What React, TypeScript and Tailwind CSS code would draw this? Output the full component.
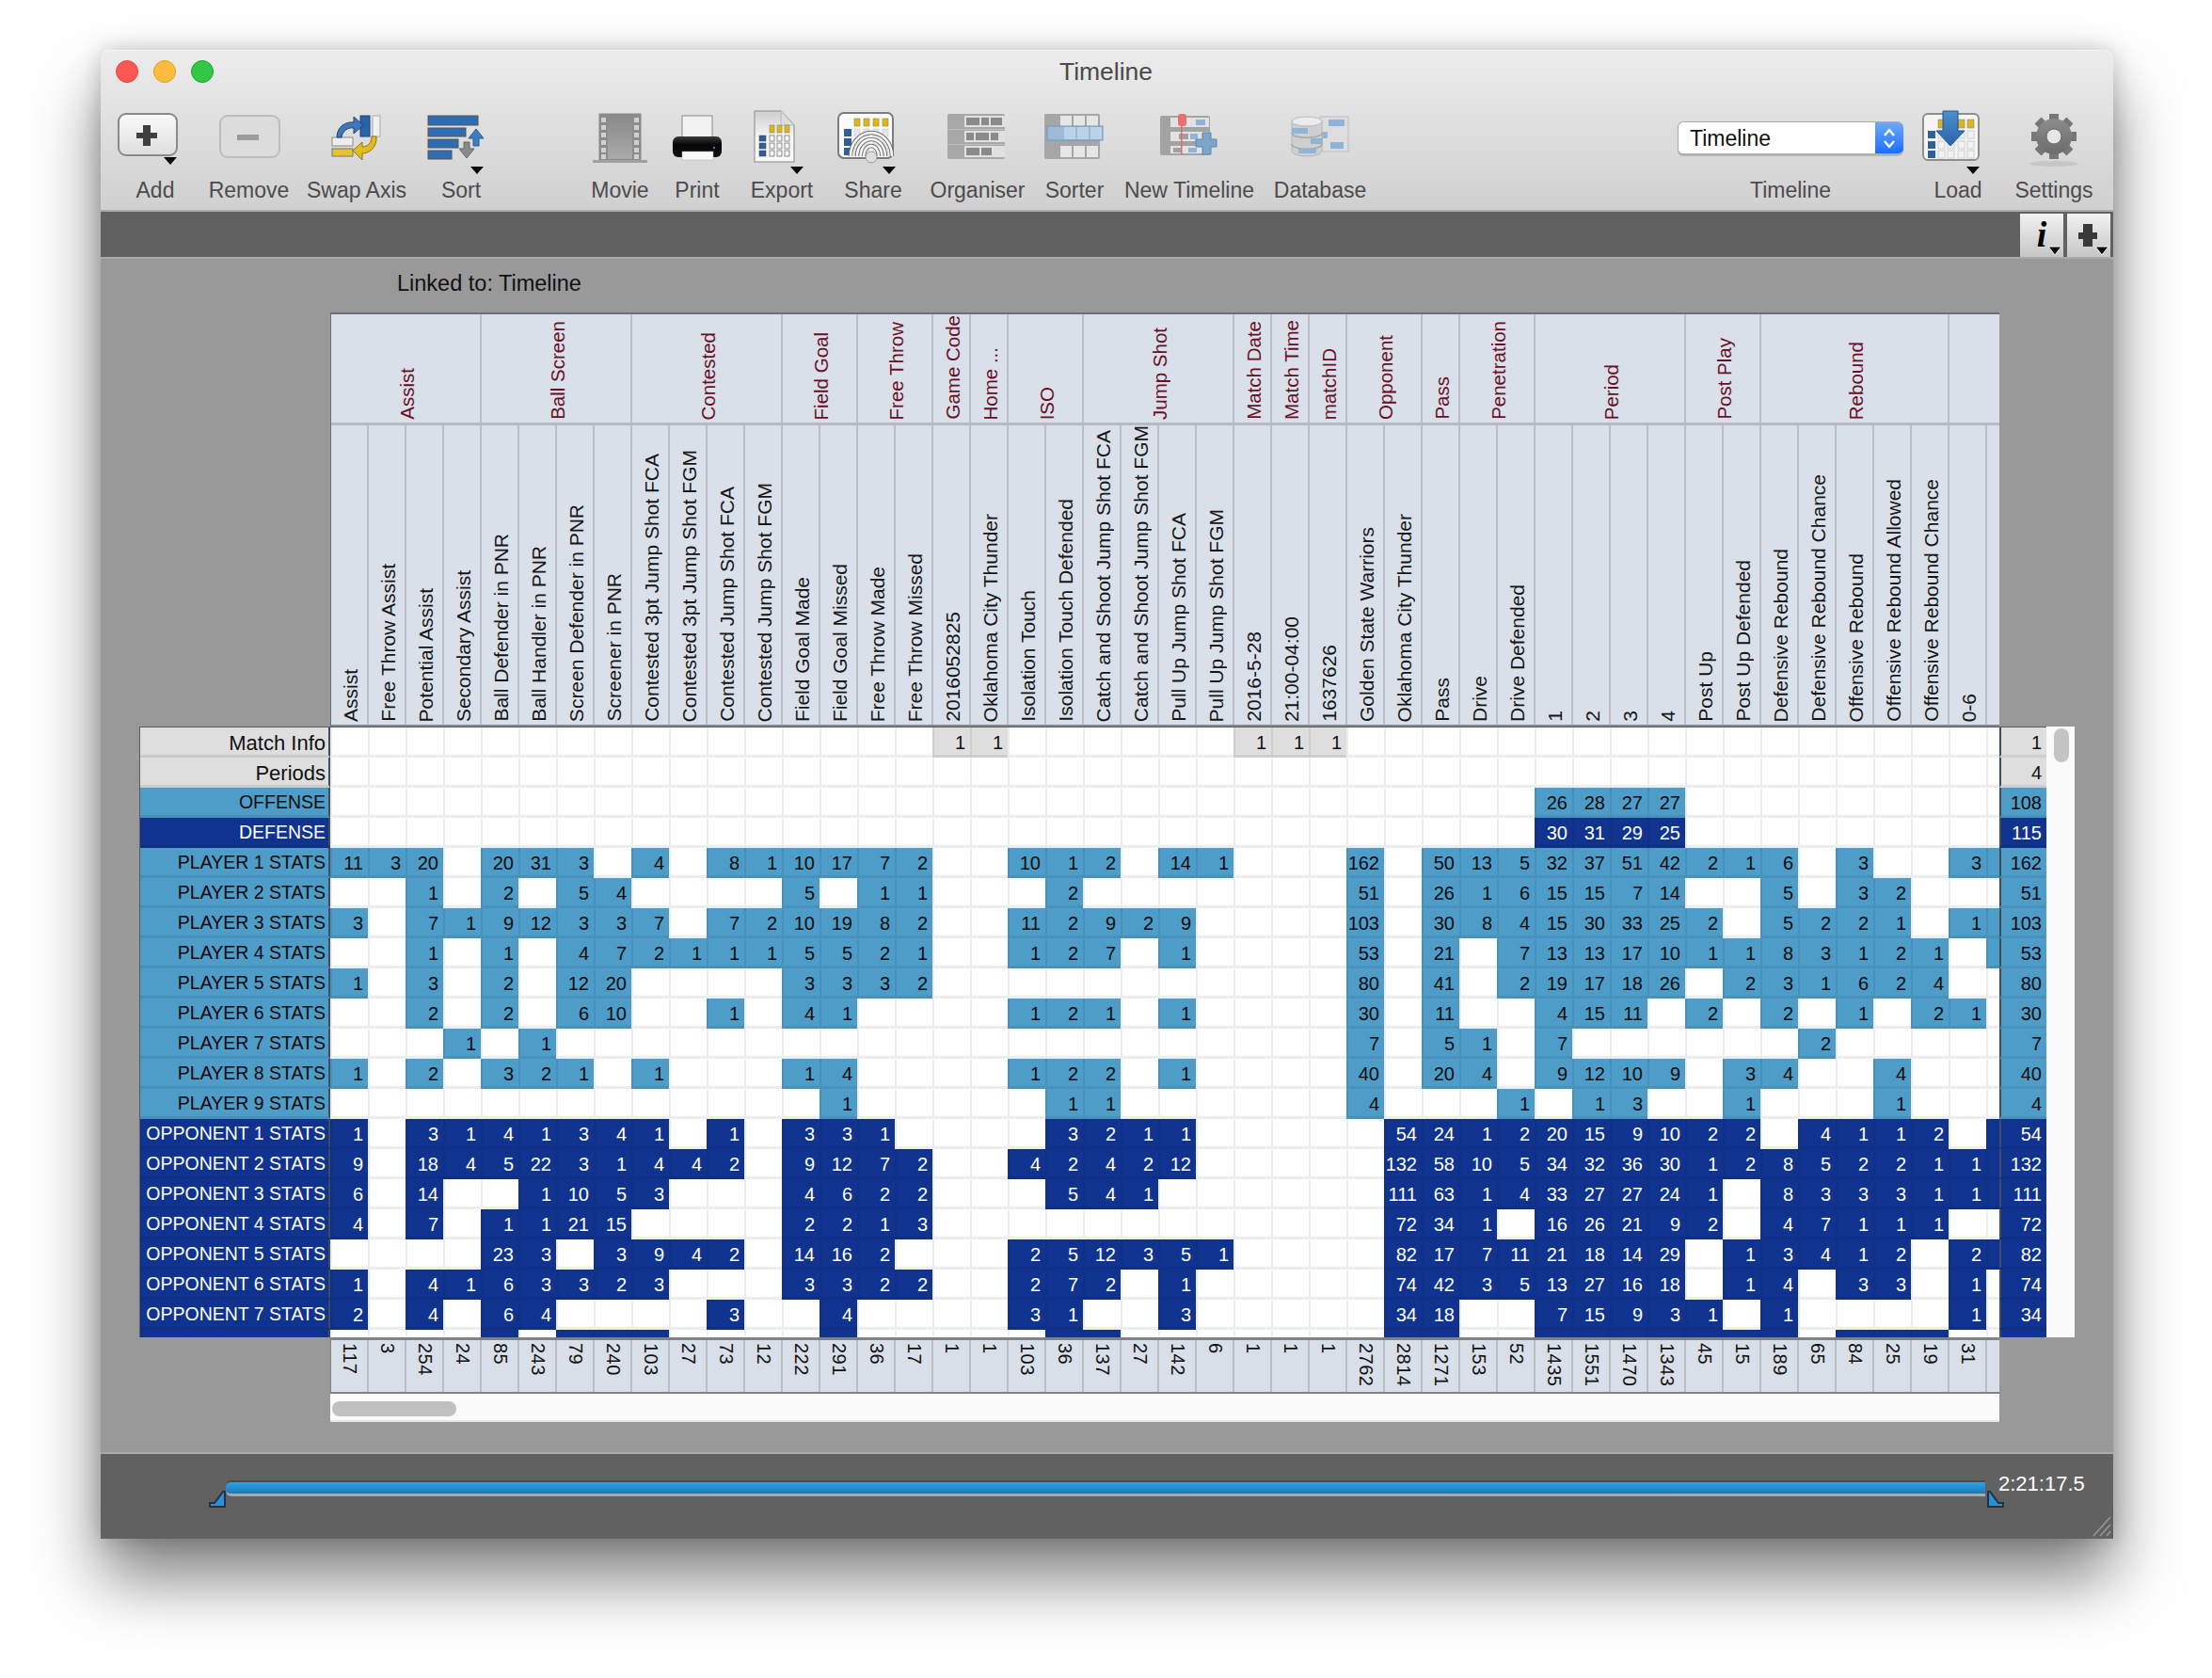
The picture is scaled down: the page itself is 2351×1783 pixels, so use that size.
import type { ReactNode } from 'react';

type Kind = 'gray' | 'light' | 'dark';

interface Group {
  name: string;
  subs: string[];
}

interface Row {
  label: string;
  kind: Kind;
  cells: string;
  total: string;
}

const groups: Group[] = [
  { name: 'Assist', subs: ['Assist', 'Free Throw Assist', 'Potential Assist', 'Secondary Assist'] },
  { name: 'Ball Screen', subs: ['Ball Defender in PNR', 'Ball Handler in PNR', 'Screen Defender in PNR', 'Screener in PNR'] },
  { name: 'Contested', subs: ['Contested 3pt Jump Shot FCA', 'Contested 3pt Jump Shot FGM', 'Contested Jump Shot FCA', 'Contested Jump Shot FGM'] },
  { name: 'Field Goal', subs: ['Field Goal Made', 'Field Goal Missed'] },
  { name: 'Free Throw', subs: ['Free Throw Made', 'Free Throw Missed'] },
  { name: 'Game Code', subs: ['2016052825'] },
  { name: 'Home ...', subs: ['Oklahoma City Thunder'] },
  { name: 'ISO', subs: ['Isolation Touch', 'Isolation Touch Defended'] },
  { name: 'Jump Shot', subs: ['Catch and Shoot Jump Shot FCA', 'Catch and Shoot Jump Shot FGM', 'Pull Up Jump Shot FCA', 'Pull Up Jump Shot FGM'] },
  { name: 'Match Date', subs: ['2016-5-28'] },
  { name: 'Match Time', subs: ['21:00-04:00'] },
  { name: 'matchID', subs: ['1637626'] },
  { name: 'Opponent', subs: ['Golden State Warriors', 'Oklahoma City Thunder'] },
  { name: 'Pass', subs: ['Pass'] },
  { name: 'Penetration', subs: ['Drive', 'Drive Defended'] },
  { name: 'Period', subs: ['1', '2', '3', '4'] },
  { name: 'Post Play', subs: ['Post Up', 'Post Up Defended'] },
  { name: 'Rebound', subs: ['Defensive Rebound', 'Defensive Rebound Chance', 'Offensive Rebound', 'Offensive Rebound Allowed', 'Offensive Rebound Chance'] },
];

// 44 columns then the clipped sliver column: "_" is an empty cell, "x" a filled one with no text
const rows: Row[] = [
  { label: 'Match Info', kind: 'gray', total: '1', cells: '_ _ _ _ _ _ _ _ _ _ _ _ _ _ _ _ 1 1 _ _ _ _ _ _ 1 1 1 _ _ _ _ _ _ _ _ _ _ _ _ _ _ _ _ _ _' },
  { label: 'Periods', kind: 'gray', total: '4', cells: '_ _ _ _ _ _ _ _ _ _ _ _ _ _ _ _ _ _ _ _ _ _ _ _ _ _ _ _ _ _ _ _ _ _ _ _ _ _ _ _ _ _ _ _ _' },
  { label: 'OFFENSE', kind: 'light', total: '108', cells: '_ _ _ _ _ _ _ _ _ _ _ _ _ _ _ _ _ _ _ _ _ _ _ _ _ _ _ _ _ _ _ _ 26 28 27 27 _ _ _ _ _ _ _ _ _' },
  { label: 'DEFENSE', kind: 'dark', total: '115', cells: '_ _ _ _ _ _ _ _ _ _ _ _ _ _ _ _ _ _ _ _ _ _ _ _ _ _ _ _ _ _ _ _ 30 31 29 25 _ _ _ _ _ _ _ _ _' },
  { label: 'PLAYER 1 STATS', kind: 'light', total: '162', cells: '11 3 20 _ 20 31 3 _ 4 _ 8 1 10 17 7 2 _ _ 10 1 2 _ 14 1 _ _ _ 162 _ 50 13 5 32 37 51 42 2 1 6 _ 3 _ _ 3 x' },
  { label: 'PLAYER 2 STATS', kind: 'light', total: '51', cells: '_ _ 1 _ 2 _ 5 4 _ _ _ _ 5 _ 1 1 _ _ _ 2 _ _ _ _ _ _ _ 51 _ 26 1 6 15 15 7 14 _ _ 5 _ 3 2 _ _ _' },
  { label: 'PLAYER 3 STATS', kind: 'light', total: '103', cells: '3 _ 7 1 9 12 3 3 7 _ 7 2 10 19 8 2 _ _ 11 2 9 2 9 _ _ _ _ 103 _ 30 8 4 15 30 33 25 2 _ 5 2 2 1 _ 1 x' },
  { label: 'PLAYER 4 STATS', kind: 'light', total: '53', cells: '_ _ 1 _ 1 _ 4 7 2 1 1 1 5 5 2 1 _ _ 1 2 7 _ 1 _ _ _ _ 53 _ 21 _ 7 13 13 17 10 1 1 8 3 1 2 1 _ x' },
  { label: 'PLAYER 5 STATS', kind: 'light', total: '80', cells: '1 _ 3 _ 2 _ 12 20 _ _ _ _ 3 3 3 2 _ _ _ _ _ _ _ _ _ _ _ 80 _ 41 _ 2 19 17 18 26 _ 2 3 1 6 2 4 _ _' },
  { label: 'PLAYER 6 STATS', kind: 'light', total: '30', cells: '_ _ 2 _ 2 _ 6 10 _ _ 1 _ 4 1 _ _ _ _ 1 2 1 _ 1 _ _ _ _ 30 _ 11 _ _ 4 15 11 _ 2 _ 2 _ 1 _ 2 1 _' },
  { label: 'PLAYER 7 STATS', kind: 'light', total: '7', cells: '_ _ _ 1 _ 1 _ _ _ _ _ _ _ _ _ _ _ _ _ _ _ _ _ _ _ _ _ 7 _ 5 1 _ 7 _ _ _ _ _ _ 2 _ _ _ _ _' },
  { label: 'PLAYER 8 STATS', kind: 'light', total: '40', cells: '1 _ 2 _ 3 2 1 _ 1 _ _ _ 1 4 _ _ _ _ 1 2 2 _ 1 _ _ _ _ 40 _ 20 4 _ 9 12 10 9 _ 3 4 _ _ 4 _ _ _' },
  { label: 'PLAYER 9 STATS', kind: 'light', total: '4', cells: '_ _ _ _ _ _ _ _ _ _ _ _ _ 1 _ _ _ _ _ 1 1 _ _ _ _ _ _ 4 _ _ _ 1 _ 1 3 _ _ 1 _ _ _ 1 _ _ _' },
  { label: 'OPPONENT 1 STATS', kind: 'dark', total: '54', cells: '1 _ 3 1 4 1 3 4 1 _ 1 _ 3 3 1 _ _ _ _ 3 2 1 1 _ _ _ _ _ 54 24 1 2 20 15 9 10 2 2 _ 4 1 1 2 _ x' },
  { label: 'OPPONENT 2 STATS', kind: 'dark', total: '132', cells: '9 _ 18 4 5 22 3 1 4 4 2 _ 9 12 7 2 _ _ 4 2 4 2 12 _ _ _ _ _ 132 58 10 5 34 32 36 30 1 2 8 5 2 2 1 1 x' },
  { label: 'OPPONENT 3 STATS', kind: 'dark', total: '111', cells: '6 _ 14 _ _ 1 10 5 3 _ _ _ 4 6 2 2 _ _ _ 5 4 1 _ _ _ _ _ _ 111 63 1 4 33 27 27 24 1 _ 8 3 3 3 1 1 x' },
  { label: 'OPPONENT 4 STATS', kind: 'dark', total: '72', cells: '4 _ 7 _ 1 1 21 15 _ _ _ _ 2 2 1 3 _ _ _ _ _ _ _ _ _ _ _ _ 72 34 1 _ 16 26 21 9 2 _ 4 7 1 1 1 _ _' },
  { label: 'OPPONENT 5 STATS', kind: 'dark', total: '82', cells: '_ _ _ _ 23 3 _ 3 9 4 2 _ 14 16 2 _ _ _ 2 5 12 3 5 1 _ _ _ _ 82 17 7 11 21 18 14 29 _ 1 3 4 1 2 _ 2 x' },
  { label: 'OPPONENT 6 STATS', kind: 'dark', total: '74', cells: '1 _ 4 1 6 3 3 2 3 _ _ _ 3 3 2 2 _ _ 2 7 2 _ 1 _ _ _ _ _ 74 42 3 5 13 27 16 18 _ 1 4 _ 3 3 _ 1 _' },
  { label: 'OPPONENT 7 STATS', kind: 'dark', total: '34', cells: '2 _ 4 _ 6 4 _ _ _ _ 3 _ _ 4 _ _ _ _ 3 1 _ _ 3 _ _ _ _ _ 34 18 _ _ 7 15 9 3 1 _ 1 _ _ _ _ 1 _' },
];

// the clipped row under OPPONENT 7
const clippedRow = '_ _ _ _ x _ x x x _ _ _ _ x _ _ _ _ _ x x _ _ _ _ _ _ _ x x _ _ x x x x x x x _ x x x _ _';

const totals = '117 3 254 24 85 243 79 240 103 27 73 12 222 291 36 17 1 1 103 36 137 27 142 6 1 1 1 2762 2814 1271 153 52 1435 1551 1470 1343 45 15 189 65 84 25 19 31'.split(' ');

const fill: Record<Kind, string> = {
  gray: 'bg-[#dedede] text-[#111]',
  light: 'bg-[#4e9dc9] text-[#0a0a0a]',
  dark: 'bg-[#10338f] text-white',
};

const digits = 'flex shrink-0 items-center justify-end border-b-[3px] border-l-[2px] border-black/[0.07] pr-[5px] pt-[3px] text-[20px]';

// viewBox uses screenshot coordinates so the drawings can be read off the reference directly
function Icon({ x, w, children }: { x: number; w: number; children: ReactNode }) {
  return (
    <svg width={w} height={75} viewBox={`${x} 115 ${w} 75`} className="overflow-visible">
      {children}
    </svg>
  );
}

function Caret({ x, y }: { x: number; y: number }) {
  return <polygon points={`${x - 7},${y - 4} ${x + 7},${y - 4} ${x},${y + 4}`} fill="#0a0a0a" />;
}

function ToolItem({ label, w, className, children }: { label: string; w: string; className?: string; children: ReactNode }) {
  return (
    <div className={`flex shrink-0 flex-col items-center ${w} ${className ?? ''}`}>
      <div className="h-[75px] w-full">{children}</div>
      <span className="h-[24px] whitespace-nowrap text-[23px] leading-[24px] text-[#4c4c4c]">{label}</span>
    </div>
  );
}

function Gear() {
  return (
    <g>
      <ellipse cx="2183" cy="174" rx="26" ry="3" fill="#000" opacity="0.08" />
      {[0, 45, 90, 135, 180, 225, 270, 315].map((a) => (
        <rect key={a} x="2178" y="121" width="10" height="14" fill="#777" transform={`rotate(${a} 2183 145)`} />
      ))}
      <circle cx="2183" cy="145" r="19" fill="url(#gearFill)" />
      <circle cx="2183" cy="145" r="8" fill="#e6e6e6" stroke="#666" strokeWidth="1" />
    </g>
  );
}

function Toolbar() {
  return (
    <div className="flex pl-[8px] pr-[19px] pt-[18px]">
      <ToolItem label="Add" w="w-[100px]">
        <Icon x={115} w={100}>
          <rect x="126" y="121" width="62" height="44" rx="8" fill="url(#btnFill)" stroke="#8a8a8a" strokeWidth="2" />
          <rect x="152" y="133" width="8" height="22" fill="#3f3f3f" />
          <rect x="145" y="141" width="22" height="6" fill="#3f3f3f" />
          <Caret x={181} y={171} />
        </Icon>
      </ToolItem>
      <ToolItem label="Remove" w="w-[99px]">
        <Icon x={215} w={99}>
          <rect x="234" y="123" width="63" height="44" rx="8" fill="#dcdcdc" stroke="#bdbdbd" strokeWidth="2" />
          <rect x="252" y="143" width="23" height="6" fill="#9c9c9c" />
        </Icon>
      </ToolItem>
      <ToolItem label="Swap Axis" w="w-[130px]">
        <Icon x={314} w={130}>
          <rect x="383" y="123" width="10" height="22" fill="#2b62a8" stroke="#1d4378" />
          <rect x="396" y="123" width="8" height="22" fill="#f0f0f0" stroke="#aaa" />
          <rect x="353" y="146" width="22" height="9" fill="#eee" stroke="#888" />
          <rect x="353" y="158" width="22" height="8" fill="#e7c529" stroke="#777" />
          <path d="M358 146 C358 134 368 129 376 130 L376 124 L386 133 L376 142 L376 136 C370 135 364 139 363 146 Z" fill="#3d77b8" stroke="#1d4378" />
          <path d="M400 145 C401 157 392 163 385 163 L385 170 L375 160 L385 151 L385 156 C391 156 395 152 395 145 Z" fill="#e2bc1e" stroke="#8a7413" />
        </Icon>
      </ToolItem>
      <ToolItem label="Sort" w="w-[92px]">
        <Icon x={444} w={92}>
          <rect x="455" y="123" width="53" height="10" fill="#2e6db4" stroke="#555" />
          <rect x="455" y="136" width="40" height="9" fill="#2e6db4" stroke="#555" />
          <rect x="455" y="148" width="32" height="9" fill="#2e6db4" stroke="#555" />
          <rect x="455" y="160" width="25" height="9" fill="#2e6db4" stroke="#555" />
          <path d="M506 137 L514 147 H509 V155 H503 V147 H498 Z" fill="#3a7fc4" stroke="#2a5a8c" />
          <path d="M496 168 L488 158 H493 V151 H499 V158 H504 Z" fill="#8a8a8a" stroke="#666" />
          <Caret x={507} y={181} />
        </Icon>
      </ToolItem>
      <ToolItem label="Movie" w="w-[86px]" className="ml-[80px]">
        <Icon x={616} w={86}>
          <rect x="637" y="121" width="44" height="49" fill="#8c8c8c" stroke="#8a8a8a" />
          <rect x="646" y="122" width="26" height="47" fill="url(#filmFill)" />
          {[125, 133, 141, 149, 157, 164].map((y) => (
            <g key={y}>
              <rect x="639" y={y} width="5" height="5" fill="#d0d0d0" />
              <rect x="674" y={y} width="5" height="5" fill="#d0d0d0" />
            </g>
          ))}
          <rect x="630" y="170" width="58" height="3" fill="#a0a0a0" />
        </Icon>
      </ToolItem>
      <ToolItem label="Print" w="w-[78px]">
        <Icon x={702} w={78}>
          <rect x="725" y="123" width="32" height="26" fill="#f2f2f2" stroke="#8a8a8a" />
          <rect x="715" y="145" width="52" height="22" rx="6" fill="url(#printFill)" />
          <rect x="725" y="161" width="33" height="9" fill="#fafafa" stroke="#aaa" strokeWidth="0.5" />
          <circle cx="759" cy="157" r="1.2" fill="#2e80e0" />
        </Icon>
      </ToolItem>
      <ToolItem label="Export" w="w-[102px]">
        <Icon x={780} w={102}>
          <path d="M802 118 H830 L844 133 V172 H802 Z" fill="url(#docFill)" stroke="#a5a5a5" strokeWidth="1.5" />
          <path d="M830 118 V133 H844 Z" fill="#dcdcdc" stroke="#bbb" />
          {[818, 826, 834].map((x) => (
            <rect key={x} x={x} y="133" width="5" height="8" fill="#d8b52a" stroke="#8a7a30" strokeWidth="0.5" />
          ))}
          {[144, 152, 160].map((y) => (
            <g key={y}>
              <rect x="807" y={y} width="7" height="6" fill="#2f5f9c" stroke="#444" strokeWidth="0.5" />
              {[818, 826, 834].map((x) => (
                <rect key={x} x={x} y={y} width="5" height="6" fill="#f5f5f5" stroke="#666" strokeWidth="0.7" />
              ))}
            </g>
          ))}
          <Caret x={847} y={181} />
        </Icon>
      </ToolItem>
      <ToolItem label="Share" w="w-[92px]">
        <Icon x={882} w={92}>
          <rect x="891" y="120" width="58" height="48" rx="6" fill="#fafafa" stroke="#7c7c7c" strokeWidth="2" />
          {[908, 918, 928, 938].map((x) => (
            <rect key={x} x={x} y="126" width="6" height="8" fill="#dcb81e" stroke="#8a7a30" strokeWidth="0.5" />
          ))}
          {[137, 147, 157].map((y) => (
            <g key={y}>
              <rect x="897" y={y} width="8" height="8" fill="#2f5f9c" />
              {[908, 918, 928, 938].map((x) => (
                <rect key={x} x={x} y={y} width="6" height="8" fill="#e6e6e6" stroke="#c4c4c4" strokeWidth="0.5" />
              ))}
            </g>
          ))}
          {[22, 15, 8].map((r) => (
            <path key={r} d={`M${926 - r} 166 A${r} ${r + 3} 0 0 1 ${926 + r} 166`} fill="none" stroke="#707070" strokeWidth="4.5" />
          ))}
          {[22, 15, 8].map((r) => (
            <path key={r} d={`M${926 - r} 166 A${r} ${r + 3} 0 0 1 ${926 + r} 166`} fill="none" stroke="#f6f6f6" strokeWidth="2.5" />
          ))}
          <circle cx="926" cy="167" r="6" fill="#dedede" stroke="#999" />
          <Caret x={945} y={181} />
        </Icon>
      </ToolItem>
      <ToolItem label="Organiser" w="w-[130px]">
        <Icon x={974} w={130}>
          <rect x="1007" y="121" width="61" height="48" rx="2" fill="#a8a8a8" />
          <rect x="1007" y="137" width="61" height="1" fill="#bdbdbd" />
          <rect x="1007" y="153" width="61" height="1" fill="#bdbdbd" />
          <rect x="1025" y="123" width="43" height="12" fill="#e0e0e0" />
          <rect x="1025" y="139" width="43" height="12" fill="#e0e0e0" />
          <rect x="1025" y="155" width="43" height="12" fill="#e0e0e0" />
          <rect x="1027" y="125" width="14" height="8" fill="#8a8a8a" />
          <rect x="1043" y="125" width="8" height="8" fill="#8a8a8a" />
          <rect x="1053" y="125" width="12" height="8" fill="#8a8a8a" />
          <rect x="1027" y="141" width="8" height="8" fill="#8a8a8a" />
          <rect x="1037" y="141" width="14" height="8" fill="#8a8a8a" />
          <rect x="1053" y="141" width="8" height="8" fill="#8a8a8a" />
          <rect x="1027" y="157" width="14" height="8" fill="#8a8a8a" />
          <rect x="1043" y="157" width="11" height="8" fill="#8a8a8a" />
        </Icon>
      </ToolItem>
      <ToolItem label="Sorter" w="w-[76px]">
        <Icon x={1104} w={76}>
          <rect x="1110" y="121" width="59" height="48" rx="2" fill="#a6a6a6" />
          {[1127, 1141, 1155].map((x) => (
            <g key={x}>
              <rect x={x} y="123" width="12" height="11" fill="#e6e6e6" />
              <rect x={x} y="155" width="12" height="12" fill="#e6e6e6" />
            </g>
          ))}
          <rect x="1113" y="134" width="59" height="15" fill="#9dbad8" stroke="#6f95bd" />
          {[1131, 1145, 1159].map((x) => (
            <rect key={x} x={x} y="135" width="12" height="13" fill="#bcd2e8" />
          ))}
        </Icon>
      </ToolItem>
      <ToolItem label="New Timeline" w="w-[168px]">
        <Icon x={1180} w={168}>
          <rect x="1233" y="123" width="53" height="42" rx="2" fill="#a3a3a3" />
          <rect x="1244" y="125" width="41" height="10" fill="#e2e2e2" />
          <rect x="1244" y="140" width="41" height="10" fill="#e2e2e2" />
          <rect x="1244" y="155" width="41" height="8" fill="#e2e2e2" />
          <rect x="1271" y="127" width="10" height="6" fill="#8fb4d8" />
          <rect x="1253" y="142" width="10" height="6" fill="#a0a0a0" />
          <rect x="1265" y="142" width="8" height="6" fill="#8fb4d8" />
          <rect x="1247" y="157" width="8" height="5" fill="#a0a0a0" />
          <rect x="1263" y="157" width="9" height="5" fill="#8fb4d8" />
          <rect x="1255" y="125" width="1.5" height="39" fill="#e06a6a" />
          <rect x="1252" y="121" width="9" height="13" rx="3" fill="#e47272" />
          <path d="M1278 141 H1287 V148 H1293 V156 H1287 V164 H1278 V156 H1271 V148 H1278 Z" fill="#7ea4c9" stroke="#5e88b0" />
        </Icon>
      </ToolItem>
      <ToolItem label="Database" w="w-[110px]">
        <Icon x={1348} w={110}>
          <rect x="1403" y="124" width="30" height="37" fill="#dddddd" stroke="#bcbcbc" />
          <rect x="1412" y="127" width="17" height="7" fill="#8fb4d8" />
          <rect x="1402" y="140" width="9" height="7" fill="#8fb4d8" />
          <rect x="1414" y="151" width="14" height="7" fill="#8fb4d8" />
          <path d="M1373 128 V160 C1373 168 1405 168 1405 160 V128 Z" fill="#cfcfcf" stroke="#b5b5b5" />
          <path d="M1373 141 C1373 148 1405 148 1405 141 M1373 153 C1373 160 1405 160 1405 153" fill="none" stroke="#a8a8a8" strokeWidth="1.5" />
          <ellipse cx="1389" cy="129" rx="16" ry="5" fill="#ececec" stroke="#bbb" />
          <rect x="1373" y="136" width="17" height="6" fill="#8fb4d8" />
          <rect x="1393" y="147" width="13" height="6" fill="#8fb4d8" />
          <rect x="1380" y="158" width="19" height="5" fill="#8fb4d8" />
        </Icon>
      </ToolItem>
      <ToolItem label="Timeline" w="w-[240px]" className="ml-auto">
        <div className="mt-[14px] flex h-[36px] w-full overflow-hidden rounded-[6px] border-b-2 border-l border-t border-[#adadad] bg-white shadow-[0_1px_1px_rgba(0,0,0,0.15)]">
          <span className="flex-1 pl-[12px] text-[23px] leading-[35px] text-[#111]">Timeline</span>
          <span className="flex w-[30px] items-center justify-center bg-gradient-to-b from-[#6aa9fa] to-[#1a6cff]">
            <svg width="14" height="24" viewBox="0 0 14 24" fill="none" stroke="white" strokeWidth="2.4">
              <path d="M2 9 L7 3 L12 9 M2 15 L7 21 L12 15" />
            </svg>
          </span>
        </div>
      </ToolItem>
      <ToolItem label="Load" w="w-[116px]">
        <Icon x={2023} w={116}>
          <rect x="2044" y="121" width="59" height="49" rx="5" fill="#f5f5f5" stroke="#8e8e8e" strokeWidth="2" />
          {[2060, 2070, 2081, 2091].map((x) => (
            <rect key={x} x={x} y="127" width="7" height="9" fill="#d8b52a" stroke="#8a7a30" strokeWidth="0.5" />
          ))}
          {[139, 150, 160].map((y) => (
            <g key={y}>
              <rect x="2049" y={y} width="8" height="8" fill="#2f5f9c" />
              {[2060, 2070, 2081, 2091].map((x) => (
                <rect key={x} x={x} y={y} width="7" height="8" fill="#f2f2f2" stroke="#d0d0d0" />
              ))}
            </g>
          ))}
          <path d="M2065 118 H2081 V139 H2088 L2073 155 L2058 139 H2065 Z" fill="url(#loadFill)" stroke="#24568c" />
          <Caret x={2097} y={181} />
        </Icon>
      </ToolItem>
      <ToolItem label="Settings" w="w-[88px]">
        <Icon x={2139} w={88}>
          <Gear />
        </Icon>
      </ToolItem>
    </div>
  );
}

function CornerButton({ children }: { children: ReactNode }) {
  return (
    <div className="relative flex h-[46px] w-[46px] items-center justify-center bg-gradient-to-b from-[#f2f2f2] to-[#c6c6c6]">
      {children}
      <svg width="16" height="11" viewBox="0 0 16 11" className="absolute bottom-[1px] right-[1px]">
        <polygon points="1,1 15,1 8,10" fill="#0a0a0a" stroke="white" strokeWidth="1" />
      </svg>
    </div>
  );
}

function TableHeader() {
  return (
    <div className="ml-[244px] w-[1774px] border-l border-t-2 border-[#6b6f76] bg-[#d9e0e9]">
      <div className="flex h-[118px] border-b-[3px] border-[#b5bac4]">
        {groups.map((g) => (
          <div
            key={g.name}
            className="flex shrink-0 items-end justify-center border-r-2 border-[#b9bec8] pb-[3px] pl-[3px]"
            style={{ width: g.subs.length * 40 }}
          >
            <span className="whitespace-nowrap text-[20.5px] leading-[28px] text-[#6a0f24] [writing-mode:vertical-rl] rotate-180">{g.name}</span>
          </div>
        ))}
      </div>
      <div className="flex h-[320px] border-b-2 border-[#85888f]">
        {groups
          .flatMap((g) => g.subs)
          .concat('0-6')
          .map((s, i) => (
            <div key={i} className="flex w-[40px] shrink-0 items-end justify-center border-r-2 border-[#b9bec8] pb-[3px] pl-[3px]">
              <span className="whitespace-nowrap text-[21px] leading-[28px] text-[#161616] [writing-mode:vertical-rl] rotate-180">{s}</span>
            </div>
          ))}
      </div>
    </div>
  );
}

function DataRow({ row }: { row: Row }) {
  const cells = row.cells.split(' ');
  return (
    <div className="flex h-8">
      <div className={`flex w-[202px] shrink-0 items-center justify-end border-b-[3px] border-r-2 border-b-black/[0.08] border-r-[#3f4d5c] pr-[3px] pt-[3px] ${row.kind === 'gray' ? 'text-[22px]' : 'text-[19.5px]'} ${fill[row.kind]}`}>
        {row.label}
      </div>
      {cells.map((c, i) => (
        <div
          key={i}
          className={`${digits} ${i === 44 ? 'w-[14px]' : 'w-[40px]'} ${c === '_' ? 'bg-white' : fill[row.kind]}`}
        >
          {c === '_' || c === 'x' ? '' : c}
        </div>
      ))}
      <div className={`${digits} w-[50px] !border-l-[#3f4d5c] ${fill[row.kind]}`}>{row.total}</div>
    </div>
  );
}

function TableBody() {
  return (
    <div className="ml-[41px] flex">
      <div className="border-l border-t border-[#5c5c5c]">
        {rows.map((row) => (
          <DataRow key={row.label} row={row} />
        ))}
        <div className="flex h-[8px]">
          <div className={`w-[202px] border-r-2 border-[#3f4d5c] ${fill.dark}`} />
          {clippedRow.split(' ').map((c, i) => (
            <div key={i} className={`${i === 44 ? 'w-[14px]' : 'w-[40px]'} border-l-[2px] border-black/[0.07] ${c === '_' ? 'bg-white' : fill.dark}`} />
          ))}
          <div className={`w-[50px] border-l-2 border-[#3f4d5c] ${fill.dark}`} />
        </div>
      </div>
      <div className="w-[30px] bg-[#fafafa] pl-[8px] pt-[2px]">
        <div className="h-[36px] w-[16px] rounded-full bg-[#c4c4c4]" />
      </div>
    </div>
  );
}

function TableFooter() {
  return (
    <div className="ml-[244px] w-[1774px]">
      <div className="flex h-[60px] border-b-2 border-l border-t-[3px] border-[#7f8388] bg-[#d8dfe8]">
        {totals.map((t, i) => (
          <div key={i} className="flex w-[40px] shrink-0 justify-center border-r-2 border-[#b9bec8] pl-[2px] pt-[3px]">
            <span className="text-[20px] leading-[26px] tracking-[0.5px] text-[#111] [writing-mode:vertical-rl]">{t}</span>
          </div>
        ))}
      </div>
      <div className="h-[30px] border-b-2 border-[#e6e6e6] bg-[#fafafa] pl-[2px] pt-[8px]">
        <div className="h-[16px] w-[132px] rounded-full bg-[#c0c0c0]" />
      </div>
    </div>
  );
}

export default function App() {
  return (
    <div className="h-[1783px] w-[2351px] overflow-hidden bg-white pl-[107px] pt-[53px] font-['Liberation_Sans',sans-serif]">
      <svg className="absolute h-0 w-0">
        <defs>
          <linearGradient id="btnFill" x1="0" y1="0" x2="0" y2="1"><stop offset="0" stopColor="#fafafa" /><stop offset="1" stopColor="#dedede" /></linearGradient>
          <linearGradient id="filmFill" x1="0" y1="0" x2="0" y2="1"><stop offset="0" stopColor="#8a8a8a" /><stop offset="1" stopColor="#aaaaaa" /></linearGradient>
          <linearGradient id="printFill" x1="0" y1="0" x2="0" y2="1"><stop offset="0" stopColor="#3a3a3a" /><stop offset="0.4" stopColor="#060606" /><stop offset="1" stopColor="#111" /></linearGradient>
          <linearGradient id="docFill" x1="0" y1="0" x2="0" y2="1"><stop offset="0" stopColor="#cfcfcf" /><stop offset="0.5" stopColor="#f4f4f4" /><stop offset="1" stopColor="#fafafa" /></linearGradient>
          <linearGradient id="loadFill" x1="0" y1="0" x2="0" y2="1"><stop offset="0" stopColor="#4a90d0" /><stop offset="1" stopColor="#2a65a8" /></linearGradient>
          <linearGradient id="gearFill" x1="0" y1="0" x2="0" y2="1"><stop offset="0" stopColor="#8c8c8c" /><stop offset="1" stopColor="#6c6c6c" /></linearGradient>
        </defs>
      </svg>

      <div className="relative h-[1582px] w-[2139px] rounded-t-[10px] shadow-[0_42px_70px_rgba(0,0,0,0.5),0_0_24px_rgba(0,0,0,0.2)]">
        {/* title bar and toolbar */}
        <div className="h-[172px] rounded-t-[10px] border-b-2 border-t border-[#ababab] border-t-[#f4f4f4] bg-gradient-to-b from-[#ececec] to-[#d0d0d0]">
          <div className="grid h-[44px] grid-cols-[1fr_auto_1fr] items-center pl-[16px]">
            <div className="flex gap-[16px]">
              <span className="h-[24px] w-[24px] rounded-full border border-[#e2463f] bg-[#fc5753]" />
              <span className="h-[24px] w-[24px] rounded-full border border-[#e1a116] bg-[#fdbc40]" />
              <span className="h-[24px] w-[24px] rounded-full border border-[#17a52c] bg-[#33c748]" />
            </div>
            <span className="pr-[18px] text-[26.5px] leading-none text-[#4a4a4a]">Timeline</span>
            <span />
          </div>
          <div className="-mt-px">
            <Toolbar />
          </div>
        </div>

        {/* dark strip with the two corner buttons */}
        <div className="flex h-[50px] items-end justify-end gap-[4px] border-b-2 border-[#aaaaaa] bg-[#616161] pr-[3px]">
          <CornerButton>
            <span className="-mt-[2px] font-['Liberation_Serif',serif] text-[38px] font-bold italic leading-none text-black">i</span>
          </CornerButton>
          <CornerButton>
            <svg width="20" height="24" viewBox="0 0 20 24" className="-ml-[3px]">
              <path d="M5 0 H15 V9 H20 V16 H15 V24 H5 V16 H0 V9 H5 Z" fill="#3a3a3a" />
            </svg>
          </CornerButton>
        </div>

        {/* table canvas */}
        <div className="h-[1268px] bg-[#999999] pt-[12px]">
          <div className="mb-[17px] h-[28px] pl-[315px] text-[23.5px] leading-[28px] text-[#111]">Linked to: Timeline</div>
          <TableHeader />
          <TableBody />
          <TableFooter />
        </div>

        {/* timeline slider */}
        <div className="relative flex h-[92px] border-t-2 border-[#aaaaaa] bg-[#616161] pl-[115px] pt-[28px]">
          <svg width="18" height="20" viewBox="0 0 18 20" className="mt-[10px] shrink-0">
            <path d="M1 18 V14 H6 L15 2 H17 V18 Z" fill="#2a90d8" stroke="#243140" strokeWidth="2" />
          </svg>
          <div className="h-[17px] w-[1870px] shrink-0 rounded-l-[6px] border-b-[3px] border-t-2 border-b-[#a9a9a9] border-t-[#4a4a4a] bg-gradient-to-b from-[#2aa4ec] to-[#1c78b4]" />
          <svg width="18" height="20" viewBox="0 0 18 20" className="ml-[2px] mt-[10px] shrink-0">
            <path d="M1 2 H3 L12 14 H17 V18 H1 Z" fill="#2a90d8" stroke="#243140" strokeWidth="2" />
          </svg>
          <span className="-ml-[6px] -mt-[8px] text-[22px] leading-[24px] text-white">2:21:17.5</span>
          <svg width="20" height="22" viewBox="0 0 20 22" className="absolute bottom-[2px] right-[2px]" stroke="#9a9a9a" strokeWidth="1.5">
            <path d="M1 21 L19 1 M8 21 L19 9 M15 21 L19 16" />
          </svg>
        </div>
      </div>
    </div>
  );
}
